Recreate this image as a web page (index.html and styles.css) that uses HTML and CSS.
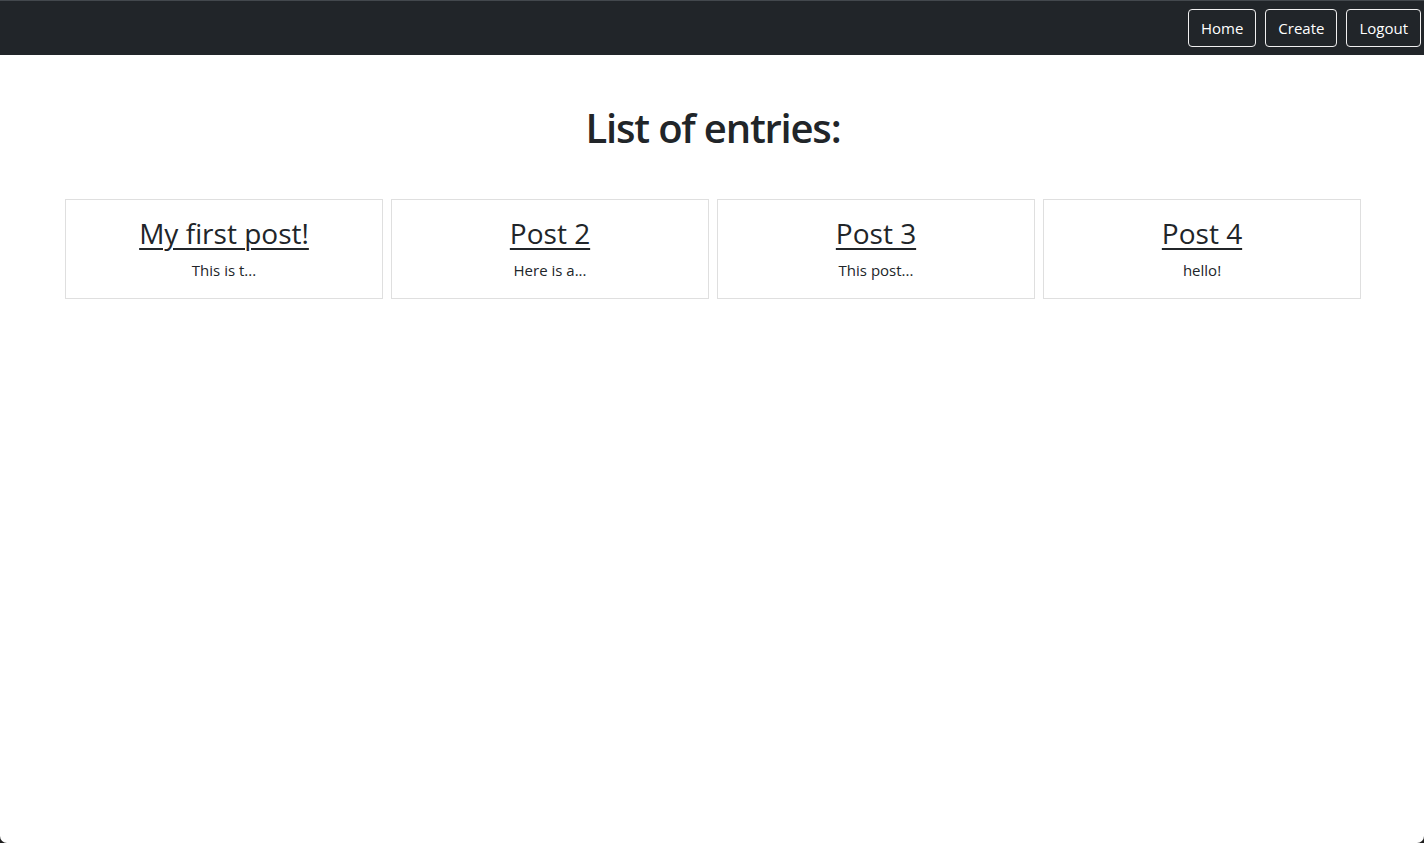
FILE: index.html
```html
<!DOCTYPE html>
<html lang="en">
<head>
<meta charset="utf-8">
<title>Entries</title>
<link rel="stylesheet" href="styles.css">
</head>
<body>
<div class="window">
  <nav class="navbar">
    <div class="nav-actions">
      <a class="btn" href="#">Home</a>
      <a class="btn" href="#">Create</a>
      <a class="btn" href="#">Logout</a>
    </div>
  </nav>
  <main class="container">
    <h1 class="page-title">List of entries:</h1>
    <div class="entries">
      <article class="entry-card">
        <h3 class="entry-title"><a href="#">My first post!</a></h3>
        <p class="entry-text">This is t...</p>
      </article>
      <article class="entry-card">
        <h3 class="entry-title"><a href="#">Post 2</a></h3>
        <p class="entry-text">Here is a...</p>
      </article>
      <article class="entry-card">
        <h3 class="entry-title"><a href="#">Post 3</a></h3>
        <p class="entry-text">This post...</p>
      </article>
      <article class="entry-card">
        <h3 class="entry-title"><a href="#">Post 4</a></h3>
        <p class="entry-text">hello!</p>
      </article>
    </div>
  </main>
</div>
</body>
</html>
```

FILE: styles.css
```css
html {
  background: #1e1e1e;
}
body {
  margin: 0;
  font-family: "Open Sans", "Noto Sans", sans-serif;
  color: #212529;
}
.window {
  min-height: 843px;
  background: #fff;
  border-bottom-left-radius: 7px;
  border-bottom-right-radius: 7px;
  overflow: hidden;
}
.navbar {
  background: #212529;
  border-top: 1px solid #43484d;
  height: 54px;
  display: flex;
  justify-content: flex-end;
  align-items: center;
  padding: 0 3px 0 0;
}
.nav-actions {
  display: flex;
  gap: 9px;
}
.btn {
  display: inline-block;
  color: #fff;
  text-decoration: none;
  font-size: 15px;
  line-height: 24px;
  padding: 6px 12px;
  border: 1px solid #f0f0f0;
  border-radius: 4px;
}
.container {
  width: 1296px;
  margin-left: calc(50% - 647px);
  padding-top: 49px;
}
.page-title {
  margin: 0 0 47px;
  text-align: center;
  font-size: 40px;
  line-height: 48px;
  font-weight: 600;
  letter-spacing: -1.2px;
}
.entries {
  display: grid;
  grid-template-columns: repeat(4, 1fr);
  gap: 8px;
}
.entry-card {
  border: 1px solid #dfdfdf;
  padding: 16px;
  text-align: center;
}
.entry-title {
  margin: 0 0 8px;
  font-size: 28px;
  line-height: 34px;
  font-weight: 400;
}
.entry-title a {
  color: #212529;
  text-decoration: underline;
  text-decoration-thickness: 2px;
  text-underline-offset: 4px;
}
.entry-text {
  margin: 0;
  font-size: 15px;
  line-height: 24px;
}
```
